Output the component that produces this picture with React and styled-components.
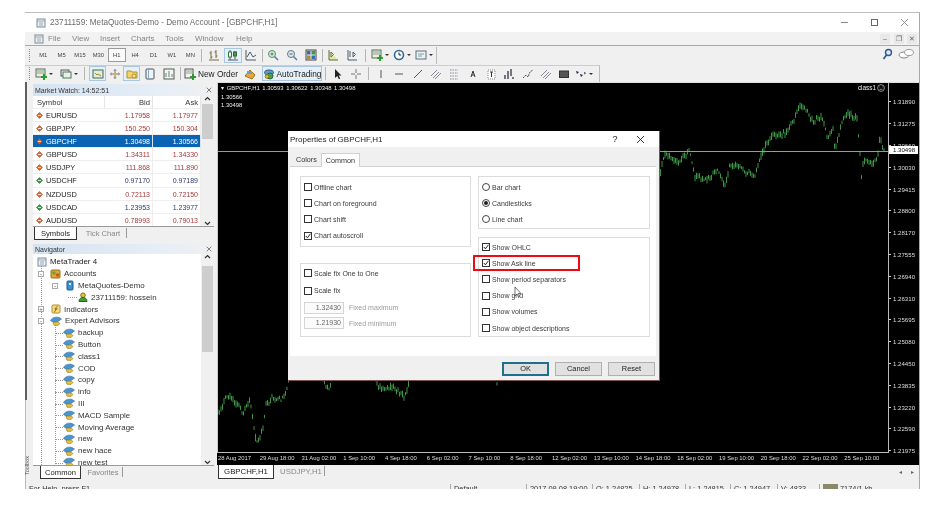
import React, { useMemo } from "react";
import styled, { createGlobalStyle } from "styled-components";

const Global = createGlobalStyle`
  html, body { margin: 0; padding: 0; background: #fff; }
  body { font-family: "Liberation Sans", Arial, sans-serif; color: #222; }
`;

const Page = styled.div`
  width: 952px; height: 512px; padding: 12px 0 0 25px; box-sizing: border-box; overflow: hidden; background: #fff;
`;
const Win = styled.div`
  width: 895px; height: 477px; display: flex; flex-direction: column; overflow: hidden; box-sizing: border-box;
  border-top: 1px solid #bdbdbd; border-right: 1px solid #a8a8a8; background: #f0f0f0; filter: blur(0.4px); box-shadow: inset 1px 0 #bbb;
`;
const TitleBar = styled.div`
  height: 19px; flex: none; background: #fff; display: flex; align-items: center; padding-left: 11px; font-size: 8.2px; color: #6a6a6a;
`;
const TitleText = styled.span` flex: 1; margin-left: 4px; `;
const WinCtl = styled.div` width: 30px; display: flex; justify-content: center; `;
const MenuBar = styled.div`
  height: 13px; flex: none; display: flex; align-items: center; padding-left: 9px; font-size: 8px; color: #858585; background: #f2f2f2; border-bottom: 1px solid #a9a9a9;
`;
const MenuIcon = styled.div` width: 14px; display: flex; `;
const MenuItem = styled.span` width: ${p => p.$w}px; `;
const MdiBtns = styled.div` margin-left: auto; display: flex; gap: 3.5px; padding-right: 2px; font-size: 7px; color: #666; `;
const MdiBtn = styled.span` width: 10px; height: 10px; background: #e8e8e8; text-align: center; line-height: 10px; `;
const ToolRow = styled.div`
  height: 18px; flex: none; display: flex; align-items: center; background: #f0f0f0; position: relative;
`;
const ToolGroup = styled.div`
  display: flex; align-items: center; height: 17px; border-right: 1px solid #bbb; border-top: ${p => (p.$top ? "1px solid #ccc" : "none")}; padding-left: 4px; width: ${p => p.$w}px; box-sizing: border-box; flex: none;
`;
const Handle = styled.i` width: 2px; height: 13px; flex: none; border-left: 1px dotted #888; box-sizing: border-box; `;
const Tf = styled.span`
  width: 18.4px; height: 14px; flex: none; font-size: 5.8px; color: #444; display: flex; align-items: center; justify-content: center; box-sizing: border-box;
  border: ${p => (p.$on ? "1px solid #9a9a9a" : "none")}; background: ${p => (p.$on ? "#fafafa" : "none")};
`;
const Tool = styled.span`
  width: ${p => p.$w || 18}px; height: 15px; flex: none; display: flex; align-items: center; justify-content: ${p => (p.$start ? "flex-start" : "center")}; gap: 2px; box-sizing: border-box; font-size: 8.3px; color: #222; white-space: nowrap;
  ${p => p.$on && "border: 1px solid #a9c7e0; background: #e6f0f8;"}
`;
const Sep = styled.i` width: 1px; height: 13px; background: #b5b5b5; flex: none; margin: 0 ${p => p.$r ?? 3}px 0 ${p => p.$l ?? 3}px; `;
const Caret = styled.b` width: 0; height: 0; border: 2px solid transparent; border-top: 2.5px solid #333; margin-top: 2px; flex: none; `;
const RightIcons = styled.div` position: absolute; right: 5px; top: 2px; display: flex; gap: 5px; align-items: center; `;

const Main = styled.div` height: 398px; flex: none; display: flex; min-height: 0; `;
const Stripe = styled.div` width: 5px; flex: none; display: flex; flex-direction: column; justify-content: space-between; align-items: flex-start; overflow: hidden; `;
const StripeDark = styled.i` width: 2px; height: 318px; background: #5f5f5f; flex: none; `;
const ToolboxLabel = styled.span` writing-mode: vertical-rl; transform: rotate(180deg); font-size: 5.5px; line-height: 5px; color: #555; margin-bottom: 5px; `;
const Side = styled.div` width: 187px; flex: none; display: flex; flex-direction: column; padding: 2px 3px 0 3px; box-sizing: border-box; `;
const PanelHead = styled.div`
  height: ${p => p.$h}px; flex: none; display: flex; justify-content: space-between; align-items: center; font-size: 7px; padding: 0 2px; color: #333;
  background: linear-gradient(90deg, #d5e3f1, #e6eef6 70%, #f0f0f0);
`;
const Market = styled.div` display: flex; flex-direction: column; height: 156px; flex: none; `;
const MarketBody = styled.div` flex: 1; display: flex; background: #fff; min-height: 0; overflow: hidden; `;
const MarketTable = styled.div` width: 168px; flex: none; `;
const MarketRow = styled.div`
  height: ${p => p.$h || 13.1}px; display: grid; grid-template-columns: 72px 48px 48px; align-items: center; font-size: 7.4px; box-sizing: border-box;
  background: ${p => (p.$sel ? "#0b63b3" : "#fff")}; color: ${p => (p.$sel ? "#fff" : "#222")}; border-bottom: 1px solid #eee;
`;
const HeadCell = styled.div` height: 100%; display: flex; align-items: center; justify-content: ${p => (p.$r ? "flex-end" : "flex-start")}; padding: 0 2px 0 4px; border-right: 1px solid #e5e5e5; color: #333; font-size: 7.6px; `;
const SymCell = styled.div` display: flex; align-items: center; gap: 3px; padding-left: 3px; `;
const PriceCell = styled.div`
  text-align: right; padding-right: 2px; font-size: 7px; color: ${p => (p.$sel ? "#fff" : p.$up ? "#2e3a6a" : "#a33a3a")}; height: 100%; line-height: 13px; border-right: 1px solid ${p => (p.$sel ? "#d5e5f2" : "#eee")};
`;
const Scroll = styled.div` flex: 1; display: flex; flex-direction: column; align-items: center; justify-content: space-between; position: relative; background: #f0f0f0; `;
const Thumb = styled.div` position: absolute; left: 1px; right: 1px; top: ${p => p.$t}px; height: ${p => p.$h}px; background: #cdcdcd; `;
const TabRow = styled.div` height: ${p => p.$h}px; flex: none; display: flex; align-items: flex-start; background: #f0f0f0; padding-left: ${p => p.$pl}px; font-size: 7.6px; border-top: 1px solid #9a9a9a; box-sizing: border-box; `;
const Tab = styled.span`
  width: ${p => p.$w}px; height: ${p => p.$tabh || 13}px; box-sizing: border-box; display: flex; align-items: center; justify-content: center; flex: none;
  ${p => (p.$on ? "background:#fff; border-left:1px solid #333; border-right:1px solid #333; border-bottom:1px solid #333; color:#222;" : "color:#888;")}
`;
const TabGap = styled.span` width: ${p => p.$w}px; flex: none; `;
const TabBar = styled.i` width: 1px; height: 10px; background: #999; margin: 1px 0 0 3px; `;
const Nav = styled.div` display: flex; flex-direction: column; flex: 1; min-height: 0; margin-top: 4px; `;
const NavBody = styled.div` flex: 1; display: flex; background: #fff; min-height: 0; overflow: hidden; `;
const Tree = styled.div` width: 168px; flex: none; position: relative; padding-top: 2px; `;
const TreeRow = styled.div`
  height: 11.8px; display: flex; align-items: center; gap: 3px; padding-left: ${p => p.$x}px; font-size: 7.9px; color: ${p => p.$c || "#333"}; white-space: nowrap; position: relative;
`;
const Expander = styled.b`
  position: absolute; left: ${p => p.$x}px; top: 3px; width: 6px; height: 6px; box-sizing: border-box; border: 1px solid #aaa; background: #fff; font: 6px/4px "Liberation Sans"; text-align: center; color: #555;
`;
const VLine = styled.i` position: absolute; left: ${p => p.$x}px; top: ${p => p.$t}px; height: ${p => p.$h}px; border-left: 1px dotted #999; `;
const HLine = styled.i` position: absolute; left: ${p => p.$x}px; width: ${p => p.$w}px; top: 6px; border-top: 1px dotted #999; `;

const Right = styled.div` flex: 1; display: flex; flex-direction: column; margin-left: 0; min-width: 0; `;
const Chart = styled.div` height: 383px; flex: none; background: #000; position: relative; color: #ddd; display: flex; flex-direction: column; overflow: hidden; `;
const ChartSvg = styled.svg` position: absolute; left: 0; top: 0; `;
const Plot = styled.div` height: 371px; flex: none; display: flex; position: relative; border-top: 1px solid #ddd; box-sizing: border-box; `;
const PlotArea = styled.div` width: 672px; flex: none; border-left: 1px solid #ccc; border-right: 1px solid #bbb; border-bottom: 1px solid #bbb; box-sizing: border-box; padding: 1px 0 0 3px; font-size: 5.9px; line-height: 8.2px; color: #eee; position: relative; `;
const Ohlc = styled.div` word-spacing: 1px; margin-bottom: 1px; `;
const ClassTag = styled.div` position: absolute; right: 3px; top: 1px; display: flex; align-items: center; gap: 1px; font-size: 6.4px; `;
const PriceAxis = styled.div` flex: 1; padding: 8px 0 0 0; font-size: 6.1px; position: relative; `;
const PriceLabel = styled.div`
  height: 21.8px; display: flex; align-items: center; padding-left: 4px; box-sizing: border-box; position: relative;
  &::before { content: ""; position: absolute; left: 0; width: 2px; height: 1px; background: #ccc; }
`;
const BidTag = styled.div` position: absolute; left: 0; top: 63px; width: 29px; height: 8px; background: #fff; color: #111; font-size: 6.1px; line-height: 8px; padding-left: 4px; box-sizing: border-box; `;
const TimeAxis = styled.div` flex: 1; display: flex; padding: 0 0 3px 1px; font-size: 5.9px; align-items: center; `;
const TimeLabel = styled.span` width: 41.75px; flex: none; white-space: nowrap; `;
const BottomTabs = styled.div` flex: 1; display: flex; align-items: flex-start; background: #f0f0f0; font-size: 7.8px; position: relative; padding-left: 1px; `;
const Arrows = styled.div` position: absolute; right: 5px; top: 3px; display: flex; gap: 9px; font-size: 6px; color: #666; `;
const StatusBar = styled.div` flex: 1; min-height: 0; overflow: hidden; display: flex; font-size: 7.4px; color: #333; padding: 4px 0 0 1px; box-sizing: border-box; `;
const StatusCell = styled.div` width: ${p => p.$w}px; height: 12px; flex: none; padding-left: 3px; box-sizing: border-box; border-right: ${p => (p.$end ? "none" : "1px solid #aaa")}; white-space: nowrap; display: flex; gap: 2px; align-items: flex-start; `;
const MemBar = styled.i` width: 15px; height: 8px; background: #8a8a6a; flex: none; `;

const Dialog = styled.div`
  position: absolute; left: 71px; top: 49px; width: 372px; height: 250px; box-sizing: border-box; background: #f0f0f0; display: flex; flex-direction: column; color: #333; border-bottom: 1px solid #7a5252; border-right: 1px solid #7a5252;
`;
const DlgTitle = styled.div` height: 16px; flex: none; background: #fff; display: flex; align-items: center; padding-left: 2px; font-size: 8px; color: #222; `;
const DlgTitleText = styled.span` flex: 1; `;
const DlgHelp = styled.span` width: 30px; text-align: center; font-size: 9px; `;
const DlgClose = styled.span` width: 29px; display: flex; justify-content: center; padding-right: 8px; box-sizing: border-box; `;
const DlgTabs = styled.div` height: 19px; flex: none; display: flex; align-items: flex-end; padding-left: 8px; font-size: 7.2px; gap: 4px; `;
const DlgTab = styled.span`
  height: ${p => (p.$on ? 14 : 12)}px; display: flex; align-items: center; padding: 0 ${p => (p.$on ? 4 : 0)}px; color: #333; box-sizing: border-box; position: relative; top: ${p => (p.$on ? 1 : -1)}px;
  ${p => p.$on && "background:#fff; border:1px solid #d0d0d0; border-bottom:none;"}
`;
const DlgPage = styled.div`
  height: 190px; flex: none; margin: 0 3px 0 2px; background: #fff; border-top: 1px solid #d0d0d0; display: grid; grid-template-columns: 171px 172px; column-gap: 7px; padding: 9px 0 0 10px; box-sizing: border-box; align-content: start;
`;
const Col = styled.div` display: flex; flex-direction: column; gap: ${p => p.$g}px; `;
const Group = styled.div` height: ${p => p.$h}px; box-sizing: border-box; border: 1px solid #dcdcdc; display: flex; flex-direction: column; padding: ${p => p.$pt}px 0 0 3px; flex: none; `;
const Field = styled.div` height: ${p => p.$h || 16.2}px; display: flex; align-items: center; gap: 2px; font-size: 7px; color: #3a3a3a; position: relative; flex: none; white-space: nowrap; `;
const Box = styled.span` width: 8px; height: 8px; box-sizing: border-box; border: 1px solid #333; background: #fff; flex: none; display: flex; `;
const Radio = styled.span` width: 8px; height: 8px; box-sizing: border-box; border: 1px solid #444; border-radius: 50%; background: #fff; flex: none; display: flex; align-items: center; justify-content: center; &::after { content: ""; width: 4px; height: 4px; border-radius: 50%; background: ${p => (p.$on ? "#222" : "transparent")}; } `;
const Highlight = styled.span` position: absolute; left: -9px; top: -0.5px; width: 107px; height: 16.5px; box-sizing: border-box; border: 2px solid #ee0a12; `;
const Cursor = styled.svg` position: absolute; left: 226px; top: 155px; `;
const FixRow = styled.div` height: 15.5px; display: flex; align-items: center; gap: 5px; font-size: 7px; color: #9a9a9a; flex: none; `;
const FixInput = styled.span` width: 40px; height: 12px; box-sizing: border-box; border: 1px solid #d5d5d5; background: #fbfbfb; text-align: right; padding-right: 2px; line-height: 10px; color: #666; `;
const DlgButtons = styled.div` flex: 1; display: flex; justify-content: flex-end; align-items: center; gap: 6px; padding: 1px 4px 0 0; `;
const Btn = styled.span`
  width: 47px; height: 14px; box-sizing: border-box; background: #e1e1e1; border: ${p => (p.$def ? "2px solid #1f6f8f" : "1px solid #b0b0b0")}; font-size: 7.4px; display: flex; align-items: center; justify-content: center; color: #222;
`;
const Glyph = styled.svg` flex: none; display: block; `;

const S = ({ w = 12, h = 12, vb = "0 0 12 12", children }) => <Glyph width={w} height={h} viewBox={vb}>{children}</Glyph>;
const Ic = ({ n }) => {
  switch (n) {
    case "bar": return <S><path d="M3 2v8M1.5 4h1.5M3 8h1.5M8 1v8M6.5 3H8M8 7h1.5M1 11h10" stroke="#7a6a3a" fill="none" /></S>;
    case "candle": return <S><path d="M3 1v10M8 2v8M1 11h10" stroke="#555" fill="none" /><rect x="1.5" y="3" width="3" height="5" fill="#fff" stroke="#2a7a3a" /><rect x="6.5" y="3" width="3" height="4" fill="#4a9a4a" stroke="#2a6a3a" /></S>;
    case "line": return <S><path d="M1 1v10h10M2 8l3-5 3 5 3-2" stroke="#4a5a6a" fill="none" /></S>;
    case "zin": return <S><circle cx="5" cy="5" r="3.5" fill="#d8ecd8" stroke="#5a8a7a" /><path d="M7.5 7.5l3.5 3.5" stroke="#5a7aa0" strokeWidth="1.5" /><path d="M3.5 5h3M5 3.5v3" stroke="#3a8a3a" /></S>;
    case "zout": return <S><circle cx="5" cy="5" r="3.5" fill="#d8e8ec" stroke="#5a7a8a" /><path d="M7.5 7.5l3.5 3.5" stroke="#5a7aa0" strokeWidth="1.5" /><path d="M3.5 5h3" stroke="#a03a3a" /></S>;
    case "tile": return <S><rect x="1" y="1" width="10" height="10" fill="#e8e8e8" stroke="#444" /><rect x="2" y="2" width="3.5" height="3.5" fill="#3a6ab0" /><rect x="6.5" y="2" width="3.5" height="3.5" fill="#3a9a4a" /><rect x="2" y="6.5" width="3.5" height="3.5" fill="#b08a3a" /><rect x="6.5" y="6.5" width="3.5" height="3.5" fill="#3a6ab0" /></S>;
    case "scroll": return <S><path d="M2 1v10h9M4 8V3M4 3l2.5 2.5L4 8" stroke="#6a6a3a" fill="#dbe8a8" /></S>;
    case "shift": return <S><path d="M2 1v10h9M7 8V3M7 3l2.5 2.5L7 8M4 2v6" stroke="#4a5a6a" fill="none" /></S>;
    case "new": return <S><rect x="1" y="1" width="9" height="8" fill="#e8f0e0" stroke="#5a6a5a" /><path d="M2 3h7M2 5h7" stroke="#8aa08a" /><path d="M9 6v6M6 9h6" stroke="#2aa02a" strokeWidth="2" /></S>;
    case "clock": return <S><circle cx="6" cy="6" r="4.5" fill="#fff" stroke="#2a6a9a" strokeWidth="1.6" /><path d="M6 3.5V6h2.2" stroke="#222" fill="none" /></S>;
    case "tmpl": return <S><rect x="1" y="2" width="10" height="8" fill="#eef2f2" stroke="#668" /><path d="M3 5h6M3 7h4" stroke="#6a9" /></S>;
    case "profile": return <S><rect x="1" y="2" width="8" height="6" fill="#f0f0f0" stroke="#555" /><rect x="3" y="4" width="8" height="6" fill="#e8f0e8" stroke="#4a7a5a" /></S>;
    case "mw": return <S><rect x="1" y="2" width="10" height="8" fill="#dfeedd" stroke="#4a6a4a" /><path d="M3 5l2 2 1-1 3 2" stroke="#a08a2a" fill="none" /></S>;
    case "nav": return <S><path d="M6 1v10M1 6h10" stroke="#777" /><path d="M6 1l2 2H4zM6 11l2-2H4zM1 6l2-2v4zM11 6L9 4v4z" fill="#a0a0a0" /><circle cx="6" cy="6" r="1.5" fill="#e0b040" /></S>;
    case "folder": return <S><path d="M1 3h4l1 1h5v6H1z" fill="#f3d26a" stroke="#b09030" /><circle cx="8" cy="8" r="2" fill="#f5e090" stroke="#b09030" /></S>;
    case "tester": return <S><rect x="2" y="1" width="8" height="10" rx="1" fill="#eef3f8" stroke="#456" /><rect x="4" y="1" width="1" height="10" fill="#8ab" /></S>;
    case "pane": return <S><rect x="1" y="1" width="10" height="10" fill="#f5f5f5" stroke="#555" /><path d="M3 9V5M6 9V3M9 9V6" stroke="#5a8a6a" /></S>;
    case "order": return <S><rect x="1" y="1" width="8" height="9" fill="#f4f4e8" stroke="#555" /><path d="M2 3h6M2 5h6" stroke="#99a" /><path d="M9 6v6M6 9h6" stroke="#2a9a2a" strokeWidth="2" /></S>;
    case "ea": return <S><path d="M1 8l5-6 5 5-3 4z" fill="#e8a838" stroke="#a07020" /><path d="M3 3h5v3H3z" fill="#6aa0d0" /></S>;
    case "auto": return <S><ellipse cx="6" cy="4.5" rx="4.5" ry="2.5" fill="#5a9ad0" stroke="#2a5a8a" /><circle cx="7" cy="8" r="3" fill="#4aa04a" stroke="#2a6a2a" /><circle cx="4" cy="8.5" r="1.8" fill="#e8c040" stroke="#907020" /></S>;
    case "arrow": return <S><path d="M3 1v9l2.3-2 1.6 3.2 1.3-.7L6.7 7.4H9.5z" fill="#222" /></S>;
    case "cross": return <S><path d="M6 1v4M6 7v4M1 6h4M7 6h4" stroke="#777" /></S>;
    case "vline": return <S><path d="M6 2v8" stroke="#555" /></S>;
    case "hline": return <S><path d="M2 6h8" stroke="#555" /></S>;
    case "tline": return <S><path d="M2 10l8-8" stroke="#555" /></S>;
    case "chan": return <S><path d="M1 8l6-6M3 10l6-6M5 11l6-6" stroke="#889" /></S>;
    case "fibo": return <S><path d="M2 2h8M2 5h8M2 8h8M2 11h8" stroke="#889" strokeDasharray="1.5 1" /></S>;
    case "text": return <S><path d="M4 9l2-6 2 6M4.7 7h2.6" stroke="#333" fill="none" /></S>;
    case "label": return <S><rect x="3" y="2" width="7" height="9" fill="#fff" stroke="#888" strokeDasharray="1 1" /><path d="M5 4h3M6.5 4v5" stroke="#333" /></S>;
    case "gann": return <S><path d="M2 11V7M5 11V3M8 8V1M10 11V9" stroke="#334" strokeWidth="1.3" /></S>;
    case "zig": return <S><path d="M1 10l3-3 2 2 2-5 3-2" stroke="#556" fill="none" strokeDasharray="2 .7" /></S>;
    case "rect": return <S><rect x="1.5" y="3" width="9" height="6.5" fill="#555" stroke="#333" /></S>;
    case "arrows": return <S><path d="M1 3l3 1-2 2zM5 6l3 1-2 2zM9 4l2 1-1.5 1.5z" fill="#224" /></S>;
    case "search": return <S w={12} h={12}><circle cx="7.5" cy="4.5" r="3" fill="#dbeaf6" stroke="#2a5a95" strokeWidth="1.4" /><path d="M5.5 7L2.5 11" stroke="#2a5a95" strokeWidth="1.7" /></S>;
    case "chat": return <S w={16} h={12} vb="0 0 16 12"><ellipse cx="6" cy="7" rx="5" ry="3" fill="#fff" stroke="#888" /><ellipse cx="11" cy="4.5" rx="4.5" ry="3" fill="#fff" stroke="#999" /></S>;
    default: return null;
  }
};

const Dir = ({ up }) => <S w={7} h={7} vb="0 0 7 7"><path d="M3.5 0.5L6.5 3.5 3.5 6.5 .5 3.5z" fill={up ? "#2f9a3f" : "#d9662a"} stroke={up ? "#15601f" : "#a03a10"} strokeWidth=".5" /><path d="M2 3.5h3" stroke="#fff" strokeWidth=".8" /></S>;
const Chev = ({ up }) => <S w={7} h={6} vb="0 0 7 6"><path d={up ? "M1 4l2.5-2.5L6 4" : "M1 2l2.5 2.5L6 2"} stroke="#333" strokeWidth="1.2" fill="none" /></S>;
const X = ({ s = 9, c = "#555" }) => <S w={s} h={s} vb="0 0 9 9"><path d="M1 1l7 7M8 1L1 8" stroke={c} strokeWidth=".9" /></S>;
const Tick = () => <S w={6} h={6} vb="0 0 6 6"><path d="M.8 3l1.6 1.8L5.4 .8" stroke="#222" strokeWidth="1" fill="none" /></S>;

const NavIc = ({ n }) => {
  switch (n) {
    case "mt": return <S w={10} h={10} vb="0 0 10 10"><rect x="1" y="1" width="8" height="8" fill="#eef2f6" stroke="#7a8a9a" /><path d="M1 3h8M3 5h4M3 7h4" stroke="#9ab" /></S>;
    case "acc": return <S w={11} h={11} vb="0 0 11 11"><rect x="1" y="2" width="9" height="8" rx="1" fill="#e0a838" stroke="#90701c" /><circle cx="4" cy="5" r="1.8" fill="#7a9a3a" /><circle cx="7.5" cy="7" r="1.8" fill="#c85a2a" /></S>;
    case "srv": return <S w={10} h={11} vb="0 0 10 11"><rect x="2" y="1" width="6" height="9" rx="1" fill="#3a90d0" stroke="#1a5a90" /><rect x="4" y="3" width="2" height="2" fill="#cfe8f8" /></S>;
    case "user": return <S w={10} h={10} vb="0 0 10 10"><circle cx="5" cy="3.2" r="2.3" fill="#e8c040" stroke="#8a7010" /><path d="M1 9.5c0-3 2-4 4-4s4 1 4 4z" fill="#3fa03f" stroke="#1a6a1a" /></S>;
    case "ind": return <S w={10} h={10} vb="0 0 10 10"><rect x="1" y="1" width="8" height="8" rx="1" fill="#f6dc80" stroke="#b09030" /><path d="M6.5 2.5C5 2.5 5 4 4.8 5.5S4 7.8 3 7.8M3.5 5h3" stroke="#8a5a10" fill="none" /></S>;
    default: return <S w={12} h={10} vb="0 0 12 10"><path d="M.5 4.5C2 1.5 6 .5 9 1.5L11.5 3 8 5.5 3 6z" fill="#4a94cf" stroke="#2b6a9e" strokeWidth=".6" /><path d="M3 6.5l5-.5 2 1.5-2 2-4-.3z" fill="#e6bf47" stroke="#93761c" strokeWidth=".6" /></S>;
  }
};

const quotes = [
  ["EURUSD", "1.17958", "1.17977", 0],
  ["GBPJPY", "150.250", "150.304", 0],
  ["GBPCHF", "1.30498", "1.30566", 0, 1],
  ["GBPUSD", "1.34311", "1.34330", 0],
  ["USDJPY", "111.868", "111.890", 0],
  ["USDCHF", "0.97170", "0.97189", 1],
  ["NZDUSD", "0.72113", "0.72150", 0],
  ["USDCAD", "1.23953", "1.23977", 1],
  ["AUDUSD", "0.78993", "0.79013", 0],
];
const advisors = ["backup", "Button", "class1", "COD", "copy", "info", "III", "MACD Sample", "Moving Average", "new", "new hace", "new test"];
const prices = ["1.31890","1.31275","1.30660","1.30030","1.29415","1.28800","1.28170","1.27555","1.26940","1.26310","1.25695","1.25080","1.24450","1.23835","1.23220","1.22590","1.21975"];
const times = ["28 Aug 2017","29 Aug 18:00","31 Aug 02:00","1 Sep 10:00","4 Sep 18:00","6 Sep 02:00","7 Sep 10:00","8 Sep 18:00","12 Sep 02:00","13 Sep 10:00","14 Sep 18:00","18 Sep 02:00","19 Sep 10:00","20 Sep 18:00","22 Sep 02:00","25 Sep 10:00"];
const pts = [[218,413],[228,395],[238,405],[243,415],[250,400],[255,435],[258,442],[262,432],[266,405],[272,398],[280,400],[285,395],[290,375],[318,360],[325,385],[330,388],[336,360],[372,360],[378,388],[395,388],[405,397],[411,372],[420,350],[490,350],[497,382],[503,350],[600,300],[655,180],[660,173],[665,153],[677,163],[690,150],[695,177],[707,180],[717,170],[725,187],[730,163],[743,170],[755,177],[763,150],[772,137],[787,132],[797,113],[800,103],[808,113],[813,122],[823,117],[827,137],[833,128],[835,150],[842,123],[848,113],[857,118],[860,153],[862,183],[863,163],[877,160],[880,137],[885,153]];

function candlePath() {
  let seed = 17; const rnd = () => { seed = (seed * 16807) % 2147483647; return seed / 2147483647; };
  let d = "";
  for (let x = 218; x <= 885; x += 1.5) {
    let i = 0; while (i < pts.length - 2 && pts[i + 1][0] < x) i++;
    const [a, b] = [pts[i], pts[i + 1]];
    const y = a[1] + (b[1] - a[1]) * (x - a[0]) / (b[0] - a[0]);
    const o = (rnd() - .5) * 4;
    d += `M${x} ${(y + o - 1 - rnd() * 3).toFixed(1)}V${(y + o + 1 + rnd() * 3).toFixed(1)}`;
  }
  return d;
}

const Tools1 = ["bar","candle","line"];

export default function App() {
  const d = useMemo(candlePath, []);
  return (
    <Page>
      <Global />
      <Win>
        <TitleBar>
          <NavIc n="mt" />
          <TitleText>23711159: MetaQuotes-Demo - Demo Account - [GBPCHF,H1]</TitleText>
          <WinCtl><S w={9} h={9} vb="0 0 9 9"><path d="M1 4.5h7" stroke="#888" /></S></WinCtl>
          <WinCtl><S w={9} h={9} vb="0 0 9 9"><rect x="1.5" y="1.5" width="6" height="6" fill="none" stroke="#666" /></S></WinCtl>
          <WinCtl><X c="#888" /></WinCtl>
        </TitleBar>
        <MenuBar>
          <MenuIcon><NavIc n="mt" /></MenuIcon>
          {[["File",24],["View",28],["Insert",31],["Charts",34],["Tools",30],["Window",41],["Help",30]].map(([t, w]) => <MenuItem key={t} $w={w}>{t}</MenuItem>)}
          <MdiBtns><MdiBtn>–</MdiBtn><MdiBtn>❐</MdiBtn><MdiBtn>✕</MdiBtn></MdiBtns>
        </MenuBar>
        <ToolRow>
          <ToolGroup $w={412}>
            <Handle />
            <TabGap $w={3} />
            {["M1","M5","M15","M30","H1","H4","D1","W1","MN"].map(t => <Tf key={t} $on={t === "H1"}>{t}</Tf>)}
            <Sep $l={1} $r={3.5} />
            {Tools1.map(n => <Tool key={n} $on={n === "candle"} $w={18.5}><Ic n={n} /></Tool>)}
            <Sep $l={1} $r={1} />
            <Tool $w={19}><Ic n="zin" /></Tool><Tool $w={19}><Ic n="zout" /></Tool><Tool $w={19}><Ic n="tile" /></Tool>
            <Sep $l={1} $r={1} />
            <Tool $w={19}><Ic n="scroll" /></Tool><Tool $w={19}><Ic n="shift" /></Tool>
            <Sep $l={3} $r={3} />
            <Tool $w={22}><Ic n="new" /><Caret /></Tool><Tool $w={22}><Ic n="clock" /><Caret /></Tool><Tool $w={22}><Ic n="tmpl" /><Caret /></Tool>
          </ToolGroup>
          <RightIcons><Ic n="search" /><Ic n="chat" /></RightIcons>
        </ToolRow>
        <ToolRow>
          <ToolGroup $w={575} $top>
            <Handle />
            <Tool $w={25}><Ic n="new" /><Caret /></Tool><Tool $w={25}><Ic n="profile" /><Caret /></Tool>
            <Sep $l={3} $r={4} />
            <Tool $w={17} $on><Ic n="mw" /></Tool><Tool $w={17}><Ic n="nav" /></Tool><Tool $w={17} $on><Ic n="folder" /></Tool><Tool $w={20}><Ic n="tester" /></Tool><Tool $w={17}><Ic n="pane" /></Tool>
            <Sep />
            <Tool $w={54} $start><Ic n="order" />New Order</Tool>
            <Tool $w={24}><Ic n="ea" /></Tool>
            <Tool $w={60} $on><Ic n="auto" />AutoTrading</Tool>
            <Sep />
            <Tool $w={17}><Ic n="arrow" /></Tool><Tool $w={19}><Ic n="cross" /></Tool>
            <Sep />
            {["vline","hline","tline","chan","fibo","text","label","gann","zig"].map(n => <Tool key={n} $w={18.3}><Ic n={n} /></Tool>)}
            <Tool $w={18}><Ic n="chan" /></Tool><Tool $w={18}><Ic n="rect" /></Tool>
            <Tool $w={22}><Ic n="arrows" /><Caret /></Tool>
          </ToolGroup>
        </ToolRow>
        <Main>
          <Stripe><StripeDark /><ToolboxLabel>Toolbox</ToolboxLabel></Stripe>
          <Side>
            <Market>
              <PanelHead $h={12}>Market Watch: 14:52:51<X s={6} c="#333" /></PanelHead>
              <MarketBody>
                <MarketTable>
                  <MarketRow $h={13}><HeadCell>Symbol</HeadCell><HeadCell $r>Bid</HeadCell><HeadCell $r>Ask</HeadCell></MarketRow>
                  {quotes.map(([s, b, a, up, sel]) => (
                    <MarketRow key={s} $sel={sel}>
                      <SymCell><Dir up={up} />{s}</SymCell>
                      <PriceCell $up={up} $sel={sel}>{b}</PriceCell>
                      <PriceCell $up={up} $sel={sel}>{a}</PriceCell>
                    </MarketRow>
                  ))}
                </MarketTable>
                <Scroll><Chev up /><Thumb $t={8} $h={35} /><Chev /></Scroll>
              </MarketBody>
              <TabRow $h={14} $pl={1}>
                <Tab $on $w={43}>Symbols</Tab><TabGap $w={6} /><Tab $w={40}>Tick Chart</Tab><TabBar />
              </TabRow>
            </Market>
            <Nav>
              <PanelHead $h={10}>Navigator<X s={6} c="#333" /></PanelHead>
              <NavBody>
                <Tree>
                  <VLine $x={8} $t={9} $h={210} />
                  <VLine $x={22} $t={70} $h={140} />
                  <TreeRow $x={4} $c="#222"><NavIc n="mt" />MetaTrader 4</TreeRow>
                  <TreeRow $x={17}><Expander $x={5}>-</Expander><NavIc n="acc" />Accounts</TreeRow>
                  <TreeRow $x={32}><Expander $x={19}>-</Expander><NavIc n="srv" />MetaQuotes-Demo</TreeRow>
                  <TreeRow $x={45}><HLine $x={35} $w={9} /><NavIc n="user" />23711159: hossein</TreeRow>
                  <TreeRow $x={18}><Expander $x={5}>+</Expander><NavIc n="ind" />Indicators</TreeRow>
                  <TreeRow $x={17}><Expander $x={5}>-</Expander><NavIc n="ea" />Expert Advisors</TreeRow>
                  {advisors.map(a => <TreeRow key={a} $x={30}><HLine $x={22} $w={8} /><NavIc n="ea" />{a}</TreeRow>)}
                </Tree>
                <Scroll><Chev up /><Thumb $t={12} $h={86} /><Chev /></Scroll>
              </NavBody>
              <TabRow $h={15} $pl={7}>
                <Tab $on $w={41}>Common</Tab><TabGap $w={6} /><Tab $w={32}>Favorites</Tab><TabBar />
              </TabRow>
            </Nav>
          </Side>
          <Right>
            <Chart>
              <ChartSvg width="702" height="383" viewBox="217 82 702 383">
                <path d={d} stroke="#3c9444" strokeWidth="1" fill="none" />
                <path d="M218 151.5H889" stroke="#9a9a9a" strokeWidth="1" />
              </ChartSvg>
              <Plot>
                <PlotArea>
                  <Ohlc>▾ GBPCHF,H1 1.30593 1.30622 1.30348 1.30498</Ohlc>
                  <div>1.30566</div>
                  <div>1.30498</div>
                  <ClassTag>class1<S w={8} h={8} vb="0 0 8 8"><circle cx="4" cy="4" r="3.4" fill="none" stroke="#ccc" strokeWidth=".7" /><path d="M2.5 3h.6M4.9 3h.6M2.5 5.3h3" stroke="#ccc" strokeWidth=".7" /></S></ClassTag>
                </PlotArea>
                <PriceAxis>
                  {prices.map(p => <PriceLabel key={p}>{p}</PriceLabel>)}
                  <BidTag>1.30498</BidTag>
                </PriceAxis>
              </Plot>
              <TimeAxis>{times.map(t => <TimeLabel key={t}>{t}</TimeLabel>)}</TimeAxis>
              <Dialog>
                <DlgTitle><DlgTitleText>Properties of GBPCHF,H1</DlgTitleText><DlgHelp>?</DlgHelp><DlgClose><X c="#222" /></DlgClose></DlgTitle>
                <DlgTabs><DlgTab>Colors</DlgTab><DlgTab $on>Common</DlgTab></DlgTabs>
                <DlgPage>
                  <Col $g={16}>
                    <Group $h={71} $pt={2}>
                      <Field><Box />Offline chart</Field>
                      <Field><Box />Chart on foreground</Field>
                      <Field><Box />Chart shift</Field>
                      <Field><Box><Tick /></Box>Chart autoscroll</Field>
                    </Group>
                    <Group $h={74} $pt={1}>
                      <Field><Box />Scale fix One to One</Field>
                      <Field $h={19}><Box />Scale fix</Field>
                      <FixRow><FixInput>1.32430</FixInput>Fixed maximum</FixRow>
                      <FixRow><FixInput>1.21930</FixInput>Fixed minimum</FixRow>
                    </Group>
                  </Col>
                  <Col $g={8}>
                    <Group $h={53} $pt={2}>
                      <Field><Radio />Bar chart</Field>
                      <Field><Radio $on />Candlesticks</Field>
                      <Field><Radio />Line chart</Field>
                    </Group>
                    <Group $h={100} $pt={1}>
                      <Field><Box><Tick /></Box>Show OHLC</Field>
                      <Field><Box><Tick /></Box>Show Ask line<Highlight /></Field>
                      <Field><Box />Show period separators</Field>
                      <Field><Box />Show grid</Field>
                      <Field><Box />Show volumes</Field>
                      <Field><Box />Show object descriptions</Field>
                    </Group>
                  </Col>
                </DlgPage>
                <DlgButtons><Btn $def>OK</Btn><Btn>Cancel</Btn><Btn>Reset</Btn></DlgButtons>
                <Cursor width="8" height="12" viewBox="0 0 8 12"><path d="M1 1v9l2-2 1.5 3 1.2-.6L4.3 7.5H7z" fill="#fff" stroke="#333" strokeWidth=".7" /></Cursor>
              </Dialog>
            </Chart>
            <BottomTabs>
              <Tab $on $w={56} $tabh={14}>GBPCHF,H1</Tab><TabGap $w={7} /><Tab $w={40}>USDJPY,H1</Tab><TabBar />
              <Arrows><span>◂</span><span>▸</span></Arrows>
            </BottomTabs>
          </Right>
        </Main>
        <StatusBar>
          <StatusCell $w={425}>For Help, press F1</StatusCell>
          <StatusCell $w={76}>Default</StatusCell>
          <StatusCell $w={66}>2017.09.08 19:00</StatusCell>
          <StatusCell $w={47}>O: 1.24825</StatusCell>
          <StatusCell $w={46}>H: 1.24978</StatusCell>
          <StatusCell $w={45}>L: 1.24815</StatusCell>
          <StatusCell $w={47}>C: 1.24947</StatusCell>
          <StatusCell $w={42}>V: 4833</StatusCell>
          <StatusCell $w={70} $end><MemBar />7174/1 kb</StatusCell>
        </StatusBar>
      </Win>
    </Page>
  );
}
